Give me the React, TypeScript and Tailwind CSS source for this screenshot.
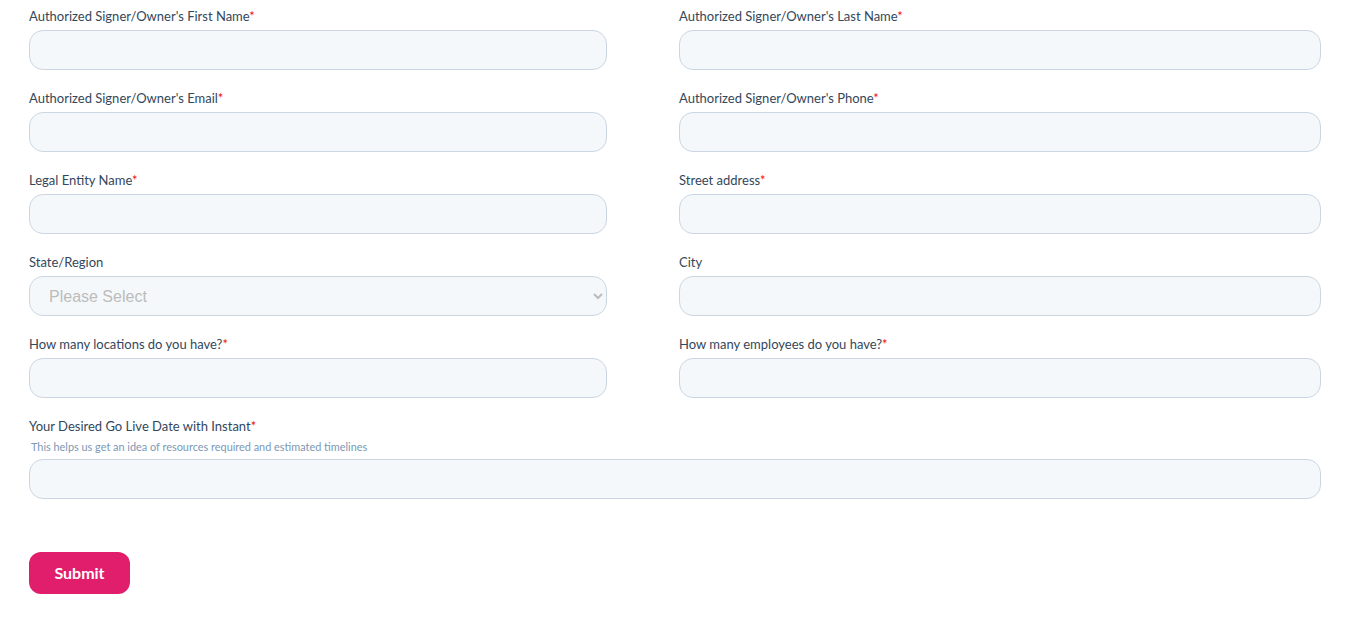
import type { ReactNode } from "react";

const inputClass =
  "block h-10 w-full rounded-[14px] border border-[#cbd6e2] bg-[#f5f8fa] px-4 text-base text-[#33475b] outline-none";

function Field({
  label,
  required,
  help,
  children,
}: {
  label: string;
  required?: boolean;
  help?: string;
  children: ReactNode;
}) {
  return (
    <div className="mb-[18px]">
      <label className="block text-[13px] leading-5 text-[#33475b]">
        {label}
        {required && <span className="text-[#f20d0d]">*</span>}
      </label>
      {help && (
        <div className="mt-[3px] pl-[2px] text-[10.9px] leading-4 text-[#7c98b6]">
          {help}
        </div>
      )}
      <div className="mt-1">{children}</div>
    </div>
  );
}

const rows: [string, boolean, string, boolean][] = [
  ["Authorized Signer/Owner's First Name", true, "Authorized Signer/Owner's Last Name", true],
  ["Authorized Signer/Owner's Email", true, "Authorized Signer/Owner's Phone", true],
  ["Legal Entity Name", true, "Street address", true],
  ["State/Region", false, "City", false],
  ["How many locations do you have?", true, "How many employees do you have?", true],
];

export default function App() {
  return (
    <div
      className="min-h-screen bg-white pl-[29px] pr-[34px] pt-[6px]"
      style={{ fontFamily: "Lato, 'Liberation Sans', sans-serif" }}
    >
      <form onSubmit={(e) => e.preventDefault()}>
        {rows.map(([l, lr, r, rr]) => (
          <div key={l} className="flex gap-[72px]">
            <div className="w-[578px]">
              <Field label={l} required={lr}>
                {l === "State/Region" ? (
                  <select
                    defaultValue=""
                    className={`${inputClass} pl-[15px] pr-2 text-[#bcbcbc]`}
                    style={{ fontFamily: "'Liberation Sans', Arial, sans-serif" }}
                  >
                    <option value="" disabled>
                      Please Select
                    </option>
                  </select>
                ) : (
                  <input type="text" className={inputClass} />
                )}
              </Field>
            </div>
            <div className="flex-1">
              <Field label={r} required={rr}>
                <input type="text" className={inputClass} />
              </Field>
            </div>
          </div>
        ))}
        <Field
          label="Your Desired Go Live Date with Instant"
          required
          help="This helps us get an idea of resources required and estimated timelines"
        >
          <input type="text" className={inputClass} />
        </Field>
        <button
          type="submit"
          className="mt-[35px] h-[42px] w-[101px] rounded-[12px] bg-[#e01e6c] text-base font-bold text-white"
        >
          Submit
        </button>
      </form>
    </div>
  );
}
